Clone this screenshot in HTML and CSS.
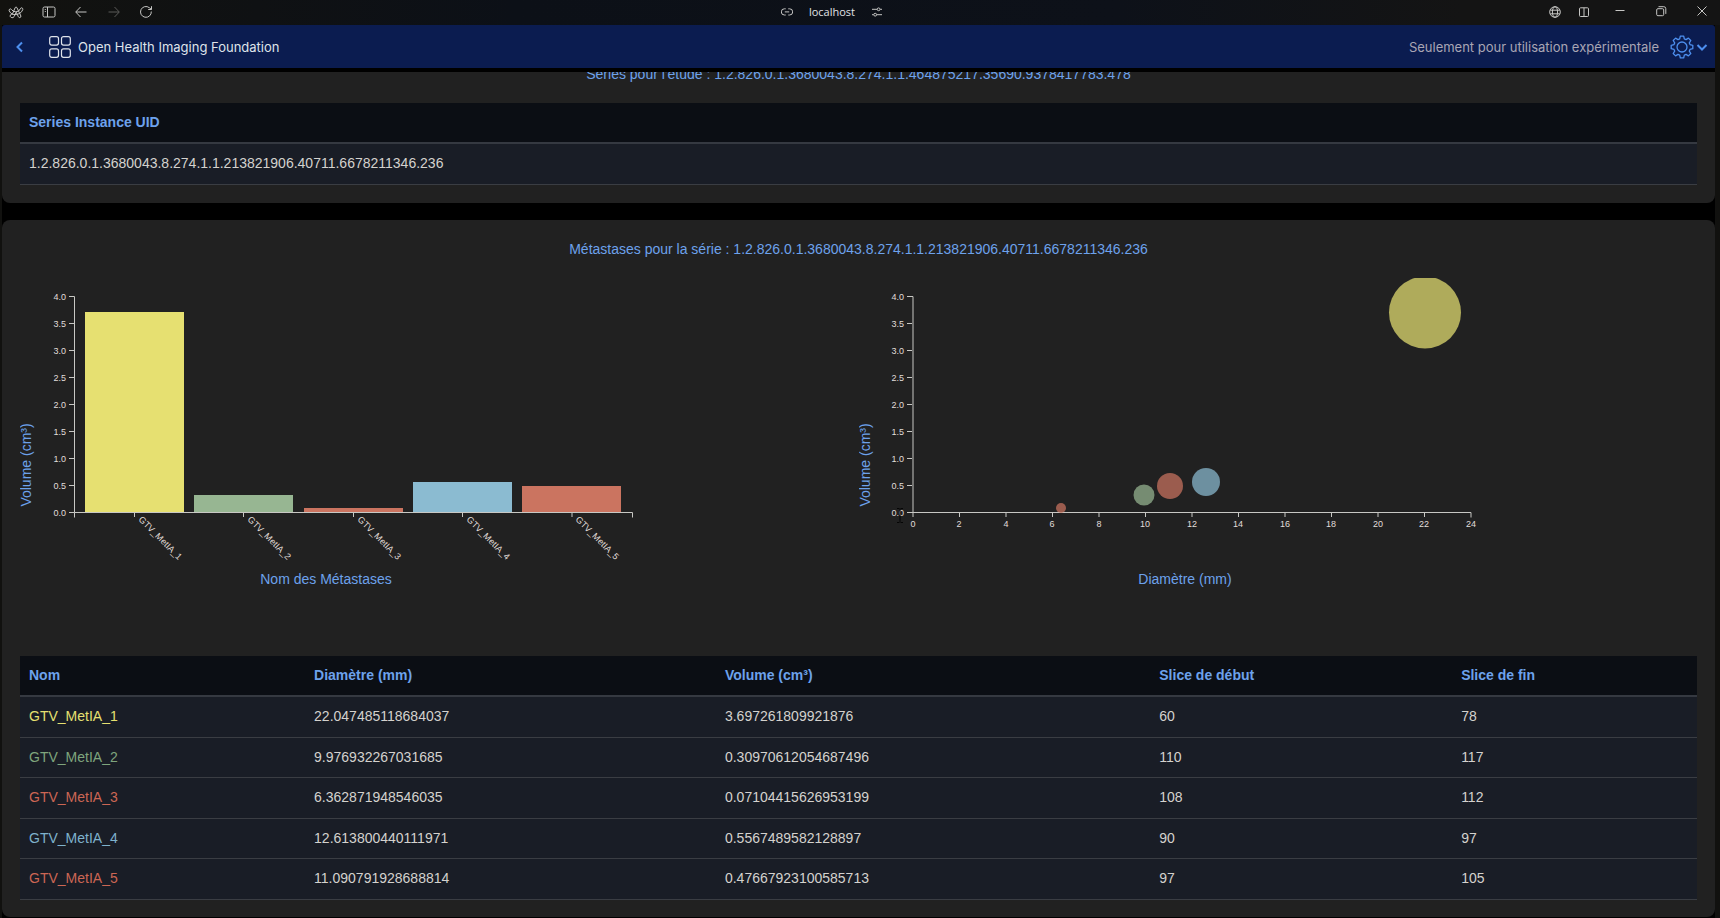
FILE: index.html
```html
<!DOCTYPE html>
<html lang="fr">
<head>
<meta charset="utf-8">
<meta name="viewport" content="width=device-width, initial-scale=1">
<title>Open Health Imaging Foundation</title>
<link rel="stylesheet" href="styles.css">
</head>
<body>
<div class="browser">
  <nav class="chrome" aria-label="Navigateur">
    <div class="chrome-left">
      <button class="icon-btn" aria-label="Menu"><svg viewBox="0 0 16 16"><path d="M4.300 10.300 7.200 3.600q.8-1.400 1.700 0l4 8.400q.2 1.500-1.300 1.600-.8 0-1.200-.8L8.200 8.200l-2 4.300q-1 1.800-3 1-1.700-1-.8-2.600.5-1 1.900-.6 4.300 1 7.300-.8 2.400-1.500 3.200-4 .2-1.400-1.100-1.700-1 0-1.400 1-1.100 3-4.500 3Q4.700 7.700 3.500 5.500q-.8-1-1.800-.4-1 .8-.5 1.800Q2.200 8.900 4.300 10.300"/></svg></button>
      <button class="icon-btn" aria-label="Barre latérale"><svg viewBox="0 0 16 16"><rect x="2" y="3" width="12" height="10" rx="1.500"/><path d="M6.500 3v10M3.800 5.500h1M3.800 7.500h1"/></svg></button>
      <button class="icon-btn" aria-label="Retour"><svg viewBox="0 0 16 16"><path d="M13.500 8H3M7.500 3 2.700 8l4.800 5"/></svg></button>
      <button class="icon-btn dim" aria-label="Suivant"><svg viewBox="0 0 16 16"><path d="M2.500 8H13M8.500 3l4.800 5-4.800 5"/></svg></button>
      <button class="icon-btn" aria-label="Recharger"><svg viewBox="0 0 16 16"><path d="M13.300 7.500a5.400 5.400 0 1 1-2-3.800l2 1.600M13.500 2.200v3.300h-3.300"/></svg></button>
    </div>
    <div class="chrome-url">
      <button class="icon-btn small" aria-label="Lien"><svg viewBox="0 0 12 12"><path d="M4.700 2.800H3.400a2.700 2.700 0 0 0 0 6.200h1.300M7.300 2.800h1.300a2.700 2.700 0 0 1 0 6.200H7.300M3.800 5.900h4.400"/></svg></button>
      <span class="host">localhost</span>
      <button class="icon-btn small" aria-label="Réglages du site"><svg viewBox="0 0 12 12"><path d="M1 3.300h5M9.200 3.300H11M1 8.700h1.600M5.800 8.700H11"/><circle cx="7.600" cy="3.300" r="1.400"/><circle cx="4.200" cy="8.700" r="1.400"/></svg></button>
    </div>
    <div class="chrome-right">
      <div class="chrome-tools">
        <button class="icon-btn" aria-label="Langue"><svg viewBox="0 0 16 16"><circle cx="8" cy="8" r="5.300"/><ellipse cx="8" cy="8" rx="2.600" ry="5.300"/><path d="M3.300 6.200h9.400M3.300 9.800h9.400"/></svg></button>
        <button class="icon-btn" aria-label="Vue partagée"><svg viewBox="0 0 16 16"><rect x="3.500" y="3.800" width="9" height="8.700" rx="1"/><path d="M8 3.800v8.700"/></svg></button>
      </div>
      <div class="chrome-window">
        <button class="icon-btn" aria-label="Réduire"><svg viewBox="0 0 16 16"><path d="M3.500 6.500h9"/></svg></button>
        <button class="icon-btn" aria-label="Restaurer"><svg viewBox="0 0 16 16"><rect x="3.700" y="4.700" width="7" height="7" rx="1.200"/><path d="M5.500 2.700h5.300a2 2 0 0 1 2 2v5.200"/></svg></button>
        <button class="icon-btn" aria-label="Fermer"><svg viewBox="0 0 16 16"><path d="m3.500 2.500 9 9M12.500 2.500l-9 9"/></svg></button>
      </div>
    </div>
  </nav>

  <div class="app">
    <header class="app-header">
      <button class="back" aria-label="Retour à la liste"><svg viewBox="0 0 16 16"><path d="M10 3.500 5.500 8l4.500 4.500"/></svg></button>
      <a class="brand" href="#">
        <svg viewBox="0 0 22 22"><rect x=".7" y=".7" width="8.800" height="8.400" rx="2"/><rect x="12.500" y=".7" width="8.800" height="8.400" rx="2"/><rect x=".7" y="12.900" width="8.800" height="8.400" rx="2"/><rect x="12.500" y="12.900" width="8.800" height="8.400" rx="2"/></svg>
        <span>Open Health Imaging Foundation</span>
      </a>
      <p class="notice">Seulement pour utilisation expérimentale</p>
      <button class="settings" aria-label="Paramètres">
        <svg class="gear" viewBox="0 0 24 24"><path d="M10.300 1.200h3.400l.6 2.700 1.700.7 2.400-1.500 2.400 2.400-1.500 2.400.7 1.700 2.800.7v3.400l-2.800.7-.7 1.700 1.500 2.400-2.400 2.400-2.400-1.500-1.700.7-.6 2.700h-3.400l-.6-2.700-1.700-.7-2.400 1.500-2.400-2.400 1.500-2.400-.7-1.700-2.800-.7v-3.400l2.800-.7.7-1.700-1.500-2.400 2.400-2.400L8 4.600l1.700-.7z"/><circle cx="12" cy="12" r="5"/></svg>
        <svg class="caret" viewBox="0 0 12 12"><path d="m1.500 4 4.500 4.500L10.500 4"/></svg>
      </button>
    </header>

    <main class="content">
      <section class="card card-series">
        <h2 class="title">Séries pour l'étude : 1.2.826.0.1.3680043.8.274.1.1.464875217.35690.9378417783.478</h2>
        <table class="data">
          <thead><tr><th scope="col">Series Instance UID</th></tr></thead>
          <tbody><tr><td>1.2.826.0.1.3680043.8.274.1.1.213821906.40711.6678211346.236</td></tr></tbody>
        </table>
      </section>

      <section class="card">
        <h2 class="title">Métastases pour la série : 1.2.826.0.1.3680043.8.274.1.1.213821906.40711.6678211346.236</h2>
        <div class="charts">
          <svg class="chart" viewBox="0 0 640 378" role="img" aria-label="Volume par métastase">
            <g class="bars">
              <rect class="c1" x="65" y="34" width="99" height="200"/>
              <rect class="c2" x="174" y="217" width="99" height="17"/>
              <rect class="c3" x="284" y="230" width="99" height="4"/>
              <rect class="c4" x="393" y="204" width="99" height="30"/>
              <rect class="c3" x="502" y="208" width="99" height="26"/>
            </g>
            <path class="axis" d="M49 18.500h5.500v216H49M49 45.500h5M49 72.500h5M49 99.500h5M49 126.500h5M49 153.500h5M49 180.500h5M49 207.500h5"/>
            <path class="axis" d="M54.500 239.500v-5h558v5M114.500 234v5M223.500 234v5M333.500 234v5M442.500 234v5M552 234v5"/>
            <g class="tick end">
              <text x="46" y="22">4.0</text><text x="46" y="49">3.5</text><text x="46" y="76">3.0</text><text x="46" y="103">2.5</text><text x="46" y="130">2.0</text><text x="46" y="157">1.5</text><text x="46" y="184">1.0</text><text x="46" y="211">0.5</text><text x="46" y="238">0.0</text>
            </g>
            <g class="tick">
              <text transform="translate(118 242) rotate(45)">GTV_MetIA_1</text>
              <text transform="translate(227 242) rotate(45)">GTV_MetIA_2</text>
              <text transform="translate(337 242) rotate(45)">GTV_MetIA_3</text>
              <text transform="translate(446 242) rotate(45)">GTV_MetIA_4</text>
              <text transform="translate(555 242) rotate(45)">GTV_MetIA_5</text>
            </g>
            <text class="axis-label" x="306" y="306">Nom des Métastases</text>
            <text class="axis-label" transform="translate(11 187) rotate(-90)">Volume (cm³)</text>
          </svg>
          <svg class="chart" viewBox="1 0 640 378" role="img" aria-label="Volume selon le diamètre">
            <path class="axis" d="M49 18.500h6v216H49M49 45.500h5M49 72.500h5M49 99.500h5M49 126.500h5M49 153.500h5M49 180.500h5M49 207.500h5"/>
            <path class="axis" d="M55 234.500h558v5M55 234v5M101.500 234v5M148 234v5M194.500 234v5M241 234v5M287.500 234v5M334 234v5M380.500 234v5M427 234v5M473.500 234v5M520 234v5M566.500 234v5"/>
            <g class="bubbles">
              <circle class="c1" cx="567" cy="34.500" r="36"/>
              <circle class="c2" cx="286" cy="217" r="10.500"/>
              <circle class="c3" cx="203" cy="230" r="5"/>
              <circle class="c4" cx="348" cy="204" r="14"/>
              <circle class="c3" cx="312" cy="208" r="13"/>
            </g>
            <g class="tick end">
              <text x="46" y="22">4.0</text><text x="46" y="49">3.5</text><text x="46" y="76">3.0</text><text x="46" y="103">2.5</text><text x="46" y="130">2.0</text><text x="46" y="157">1.5</text><text x="46" y="184">1.0</text><text x="46" y="211">0.5</text><text x="46" y="238">0.0</text>
            </g>
            <g class="tick middle">
              <text x="55" y="249">0</text><text x="101" y="249">2</text><text x="148" y="249">4</text><text x="194" y="249">6</text><text x="241" y="249">8</text><text x="287" y="249">10</text><text x="334" y="249">12</text><text x="380" y="249">14</text><text x="427" y="249">16</text><text x="473" y="249">18</text><text x="520" y="249">20</text><text x="566" y="249">22</text><text x="613" y="249">24</text>
            </g>
            <path class="caret-mark" d="M39 230.500h2.500M42.500 230.500H45M42 231v13M39 244.500h2.500M42.500 244.500H45"/>
            <text class="axis-label" x="327" y="306">Diamètre (mm)</text>
            <text class="axis-label" transform="translate(12 187) rotate(-90)">Volume (cm³)</text>
          </svg>
        </div>
        <table class="data">
          <colgroup><col class="w-name"><col class="w-diameter"><col class="w-volume"><col class="w-start"><col></colgroup>
          <thead><tr><th scope="col">Nom</th><th scope="col">Diamètre (mm)</th><th scope="col">Volume (cm³)</th><th scope="col">Slice de début</th><th scope="col">Slice de fin</th></tr></thead>
          <tbody>
            <tr><td class="c1">GTV_MetIA_1</td><td>22.047485118684037</td><td>3.697261809921876</td><td>60</td><td>78</td></tr>
            <tr><td class="c2">GTV_MetIA_2</td><td>9.976932267031685</td><td>0.30970612054687496</td><td>110</td><td>117</td></tr>
            <tr><td class="c3">GTV_MetIA_3</td><td>6.362871948546035</td><td>0.07104415626953199</td><td>108</td><td>112</td></tr>
            <tr><td class="c4">GTV_MetIA_4</td><td>12.613800440111971</td><td>0.5567489582128897</td><td>90</td><td>97</td></tr>
            <tr><td class="c3">GTV_MetIA_5</td><td>11.090791928688814</td><td>0.47667923100585713</td><td>97</td><td>105</td></tr>
          </tbody>
        </table>
      </section>
    </main>
  </div>
</div>
</body>
</html>
```

FILE: styles.css
```css
* { box-sizing: border-box; }

body {
  margin: 0;
  background: #11110f;
  color: #d4d2ce;
  font-family: "Liberation Sans", Arial, sans-serif;
  font-size: 14px;
}

button {
  display: flex;
  align-items: center;
  padding: 0;
  border: 0;
  background: none;
  color: inherit;
}

svg {
  display: block;
  fill: none;
  stroke: currentColor;
}

.browser {
  display: flex;
  flex-direction: column;
  min-height: 100vh;
}

/* Browser bar */
.chrome {
  display: grid;
  grid-template-columns: 45.4% auto 1fr;
  align-items: center;
  height: 25px;
  padding-bottom: 2px;
  background: linear-gradient(90deg, #12120f, #0c1017 30%, #0d1119 65%, #141414 85%);
  color: #c6c6c4;
}

.chrome-left {
  display: flex;
  justify-content: space-between;
  width: 154px;
  padding-left: 8px;
}

.chrome-url {
  display: flex;
  align-items: center;
  gap: 16px;
}

.host {
  color: #e0e2e6;
  font: 11px/16px "Open Sans", sans-serif;
}

.chrome-right {
  display: flex;
  justify-content: flex-end;
  gap: 20px;
  padding-right: 10px;
}

.chrome-tools { display: flex; gap: 13px; }
.chrome-window { display: flex; gap: 25px; }

.icon-btn svg { width: 16px; height: 16px; }
.icon-btn.small svg { width: 12px; height: 12px; }
.icon-btn.dim { color: #5a5a58; }

/* Application */
.app {
  display: flex;
  flex: 1;
  flex-direction: column;
  margin: 0 5px 0 2px;
  background: #000;
}

.app-header {
  display: flex;
  align-items: center;
  height: 43px;
  padding: 0 7px 0 10px;
  border-radius: 3px 3px 0 0;
  background: #0b1c50;
  font-family: Inter, sans-serif;
}

.back { margin-right: 21px; color: #4d8fee; }
.back svg { width: 16px; height: 16px; stroke-width: 2; }

.brand {
  display: flex;
  align-items: center;
  gap: 7px;
  color: #dfe3ea;
  font-size: 13px;
  text-decoration: none;
}
.brand svg { width: 22px; height: 22px; stroke-width: 1.2; }

.notice {
  margin: 0 11px 0 auto;
  color: #a9a6b4;
  font-size: 13px;
}

.settings { gap: 2px; color: #4d8fee; }
.gear { width: 24px; height: 24px; stroke-width: 1.3; stroke-linejoin: round; }
.caret { width: 12px; height: 12px; stroke-width: 2; }

.content {
  display: flex;
  flex: 1;
  flex-direction: column;
  gap: 17px;
  margin-top: 4px;
  overflow: hidden;
}

.card {
  padding: 18px 18px 17px;
  border-radius: 8px;
  background: #212121;
}

/* The series list is scrolled partly under the header. */
.card-series { margin-top: -27px; padding-bottom: 18px; }

.title {
  margin: 0 0 18px;
  color: #6da2ec;
  font-size: 14px;
  font-weight: 400;
  line-height: 22px;
  text-align: center;
}

/* Charts */
.charts {
  display: grid;
  grid-template-columns: 1fr 1fr;
}

.chart {
  width: 100%;
  max-width: 640px;
  overflow: hidden;
}

.axis { stroke: #c8c8c4; }
.tick, .axis-label { stroke: none; }
.tick { fill: #e0deda; font-size: 9px; }
.end { text-anchor: end; }
.middle { text-anchor: middle; }
.axis-label { fill: #6da2ec; font-size: 14px; text-anchor: middle; }
.bars, .bubbles { stroke: none; }
.bubbles { opacity: .72; }
.caret-mark { stroke: #050505; }

.c1 { color: #e6e071; }
.c2 { color: #97b692; }
.c3 { color: #cb7460; }
.c4 { color: #8bbbd1; }
.bars rect, .bubbles circle { fill: currentColor; }

/* Tables */
.data {
  width: 100%;
  border-collapse: separate;
  border-spacing: 0;
  table-layout: fixed;
}

.data th, .data td {
  height: 41px;
  padding: 0 9px 2px;
  border-bottom: 1px solid #3a3d43;
  line-height: 18px;
  text-align: left;
}

.data th {
  border-bottom: 2px solid #353941;
  background: #0b0e14;
  color: #6da2ec;
}

.data td { background: #191d26; }
.data tr:nth-child(even) td { height: 40px; }

.w-name { width: 17%; }
.w-diameter { width: 24.500%; }
.w-volume { width: 25.900%; }
.w-start { width: 18%; }

.data .c2 { color: #7fa57d; }
.data .c3 { color: #cc6654; }
.data .c4 { color: #7fb2cc; }
```
